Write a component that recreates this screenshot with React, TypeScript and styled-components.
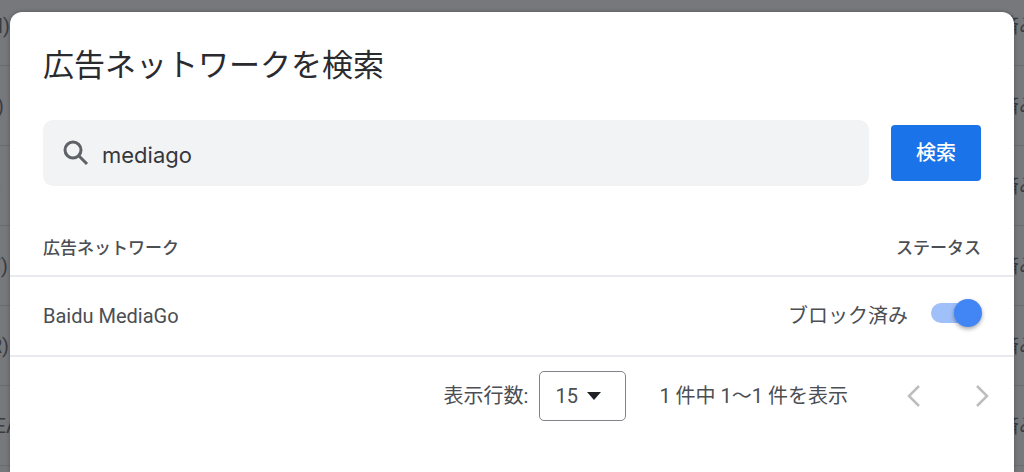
import React, { useState } from "react";
import styled, { createGlobalStyle } from "styled-components";

const GlobalStyle = createGlobalStyle`
  *, *::before, *::after { box-sizing: border-box; }
  html, body, #root { height: 100%; }
  body {
    margin: 0;
    overflow: hidden;
    background: #77787b;
    color: #4b4e53;
    font-family: Roboto, "Noto Sans CJK JP", sans-serif;
    font-size: 20px;
    line-height: 28px;
  }
  button, input, select { font: inherit; color: inherit; }
`;

const Page = styled.div`
  position: relative;
  height: 100%;
  overflow: hidden;
  padding: 12px 10px 0;
`;

const Backdrop = styled.div`
  position: absolute;
  inset: -14px 0 auto;
  color: #3b3c42;
`;

const BackdropRow = styled.div`
  display: flex;
  justify-content: space-between;
  align-items: center;
  height: 80px;
  border-bottom: 1px solid #6a6b73;
  white-space: nowrap;
`;

const BackdropName = styled.span<{ $end: number }>`
  display: flex;
  justify-content: flex-end;
  width: ${(p) => p.$end}px;
`;

const BackdropStatus = styled.span`
  width: 25px;
`;

const Dialog = styled.section`
  position: relative;
  min-height: 100%;
  background: #fff;
  border-radius: 12px 12px 0 0;
  box-shadow: 0 0 4px rgba(0, 0, 0, 0.3);
`;

const Title = styled.h2`
  margin: 0;
  padding: 32px 33px 0;
  color: #2a2b2f;
  font-size: 31px;
  line-height: 44px;
  font-weight: 400;
`;

const SearchForm = styled.form`
  display: flex;
  align-items: center;
  gap: 22px;
  padding: 32px 33px 0;
`;

const SearchBox = styled.label`
  display: flex;
  flex: 1;
  align-items: center;
  gap: 8px;
  height: 66px;
  padding: 0 19px;
  border-radius: 10px;
  background: #f1f3f4;
`;

const SearchInput = styled.input`
  flex: 1;
  min-width: 0;
  height: 66px;
  padding: 4px 0 0;
  border: 0;
  outline: 0;
  background: transparent;
  color: #36373b;
  font-family: Inter, "Noto Sans CJK JP", sans-serif;
  font-size: 22px;
`;

const SearchButton = styled.button`
  width: 90px;
  height: 56px;
  padding: 0;
  border: 0;
  border-radius: 4px;
  background: #1a73e8;
  color: #fff;
  font-weight: 500;
`;

const Table = styled.table`
  width: 100%;
  margin-top: 30px;
  border-collapse: collapse;
`;

const Row = styled.tr`
  height: 80px;
  border-bottom: 2px solid #e8eaed;
`;

const HeadRow = styled(Row)`
  height: 60px;
  font-size: 17px;
`;

const HeadCell = styled.th<{ $end?: boolean }>`
  padding: 4px 33px 0;
  text-align: ${(p) => (p.$end ? "right" : "left")};
  font-weight: 500;
`;

const Cell = styled.td`
  padding: 0 32px 0 33px;
`;

const Status = styled.label`
  display: flex;
  justify-content: flex-end;
  align-items: center;
  gap: 23px;
`;

const Switch = styled.input`
  appearance: none;
  position: relative;
  width: 51px;
  height: 28px;
  margin: 0 0 6px;

  &::before {
    content: "";
    position: absolute;
    inset: 4px 4px 4px 0;
    border-radius: 10px;
    background: #bdc1c6;
  }
  &::after {
    content: "";
    position: absolute;
    top: 0;
    left: 0;
    width: 28px;
    height: 28px;
    border-radius: 50%;
    background: #fafafa;
    box-shadow: 0 2px 4px rgba(0, 0, 0, 0.35);
  }
  &:checked::before { background: #a0c0fa; }
  &:checked::after { left: auto; right: 0; background: #4285f4; }
`;

const Pager = styled.footer`
  display: flex;
  justify-content: flex-end;
  align-items: center;
  padding: 14px 18px 0 0;
`;

const PageSize = styled.label`
  display: flex;
  align-items: center;
  gap: 11px;
`;

const SelectFrame = styled.span`
  display: grid;
  align-items: center;
  svg, select { grid-area: 1 / 1; }
  svg {
    justify-self: end;
    margin-right: 25px;
    pointer-events: none;
  }
`;

const Select = styled.select`
  appearance: none;
  width: 87px;
  height: 50px;
  padding: 0 15px;
  border: 1px solid #808388;
  border-radius: 5px;
  background: #fff;
`;

const Range = styled.span`
  margin: 0 52px 0 33px;
`;

const PageButton = styled.button`
  display: flex;
  justify-content: center;
  width: 28px;
  padding: 0;
  border: 0;
  background: none;
  color: #bdbdbd;
  & + & { margin-left: 40px; }
`;

const backdropRows = [
  { name: "(CN)", end: 10 },
  { name: "(US)", end: 4 },
  { name: "(JP)", end: 1 },
  { name: "(DV)", end: 8 },
  { name: "(KR)", end: 9 },
  { name: "EA", end: 19 },
];

const SearchIcon = () => (
  <svg width="32" height="32" viewBox="0 0 32 32" fill="none" stroke="#5f6368" strokeWidth="3" aria-hidden="true">
    <circle cx="11" cy="13" r="8" />
    <path d="M16.5 18.5 25 27" />
  </svg>
);

const Chevron = ({ d }: { d: string }) => (
  <svg width="14" height="22" viewBox="0 0 14 22" fill="none" stroke="currentColor" strokeWidth="2.5" aria-hidden="true">
    <path d={d} />
  </svg>
);

export default function App() {
  const [query, setQuery] = useState("mediago");
  const [blocked, setBlocked] = useState(true);

  return (
    <Page>
      <GlobalStyle />
      <Backdrop aria-hidden="true">
        {backdropRows.map((row) => (
          <BackdropRow key={row.name}>
            <BackdropName $end={row.end}>{row.name}</BackdropName>
            <BackdropStatus>済み</BackdropStatus>
          </BackdropRow>
        ))}
      </Backdrop>
      <Dialog role="dialog" aria-labelledby="dialog-title">
        <Title id="dialog-title">広告ネットワークを検索</Title>
        <SearchForm onSubmit={(e) => e.preventDefault()}>
          <SearchBox>
            <SearchIcon />
            <SearchInput aria-label="広告ネットワークを検索" value={query} onChange={(e) => setQuery(e.target.value)} />
          </SearchBox>
          <SearchButton type="submit">検索</SearchButton>
        </SearchForm>
        <Table>
          <thead>
            <HeadRow>
              <HeadCell scope="col">広告ネットワーク</HeadCell>
              <HeadCell scope="col" $end>ステータス</HeadCell>
            </HeadRow>
          </thead>
          <tbody>
            <Row>
              <Cell>Baidu MediaGo</Cell>
              <Cell>
                <Status>
                  ブロック済み
                  <Switch type="checkbox" role="switch" checked={blocked} onChange={(e) => setBlocked(e.target.checked)} />
                </Status>
              </Cell>
            </Row>
          </tbody>
        </Table>
        <Pager>
          <PageSize>
            表示行数:
            <SelectFrame>
              <Select defaultValue="15">
                <option>15</option>
                <option>50</option>
                <option>100</option>
              </Select>
              <svg width="14" height="8" viewBox="0 0 14 8" aria-hidden="true">
                <path d="M0 0h14L7 8z" fill="#202124" />
              </svg>
            </SelectFrame>
          </PageSize>
          <Range>1 件中 1〜1 件を表示</Range>
          <PageButton type="button" aria-label="前のページ" disabled>
            <Chevron d="M12 1 2 11l10 10" />
          </PageButton>
          <PageButton type="button" aria-label="次のページ" disabled>
            <Chevron d="m2 1 10 10L2 21" />
          </PageButton>
        </Pager>
      </Dialog>
    </Page>
  );
}
